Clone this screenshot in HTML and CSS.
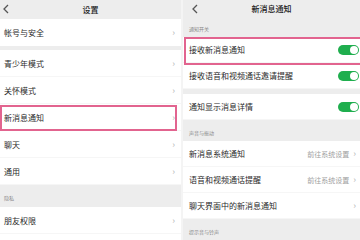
FILE: index.html
```html
<!DOCTYPE html>
<html lang="zh-CN">
<head>
  <meta charset="utf-8">
  <title>设置 / 新消息通知</title>
  <link rel="stylesheet" href="styles.css">
</head>
<body>
  <div class="screen left">
    <div class="bar">
      <svg class="back" width="8" height="10" viewBox="0 0 8 10"><polyline points="6,1 2,5 6,9" fill="none" stroke="#555" stroke-width="1.3"/></svg>
      <span class="title">设置</span>
    </div>
    <div class="row first"><span>帐号与安全</span><i class="chev">›</i></div>
    <div class="gap"></div>
    <div class="row"><span>青少年模式</span><i class="chev">›</i></div>
    <div class="row"><span>关怀模式</span><i class="chev">›</i></div>
    <div class="row hl"><span>新消息通知</span><i class="chev">›</i></div>
    <div class="row"><span>聊天</span><i class="chev">›</i></div>
    <div class="row"><span>通用</span><i class="chev">›</i></div>
    <div class="label tall">隐私</div>
    <div class="row"><span>朋友权限</span><i class="chev">›</i></div>
  </div>

  <div class="seam"></div>

  <div class="screen right">
    <div class="bar tallbar">
      <svg class="back" width="8" height="10" viewBox="0 0 8 10"><polyline points="6,1 2,5 6,9" fill="none" stroke="#555" stroke-width="1.3"/></svg>
      <span class="title">新消息通知</span>
    </div>
    <div class="label">通知开关</div>
    <div class="row hl"><span>接收新消息通知</span><b class="switch"></b></div>
    <div class="row"><span>接收语音和视频通话邀请提醒</span><b class="switch"></b></div>
    <div class="gap"></div>
    <div class="row"><span>通知显示消息详情</span><b class="switch"></b></div>
    <div class="label">声音与振动</div>
    <div class="row"><span>新消息系统通知</span><em class="hint">前往系统设置 <i class="chev">›</i></em></div>
    <div class="row"><span>语音和视频通话提醒</span><em class="hint">前往系统设置 <i class="chev">›</i></em></div>
    <div class="row"><span>聊天界面中的新消息通知</span><i class="chev">›</i></div>
    <div class="label">提示音与铃声</div>
  </div>
</body>
</html>
```

FILE: styles.css
```css
* { margin: 0; padding: 0; box-sizing: border-box; }
body {
  font-family: "Noto Sans CJK SC", "Noto Sans", sans-serif;
  width: 360px; height: 240px; overflow: hidden;
  display: flex; background: #fff; color: #2a2a2a;
}
.screen { display: flex; flex-direction: column; overflow: hidden; background: #fff; }
.left { width: 181px; }
.right { flex: 1; }
.seam { width: 2px; background: #f4f4f4; }

.bar {
  height: 19px; background: #ededed; position: relative;
  display: flex; align-items: center; justify-content: center;
}
.tallbar { height: 22px; }
.back { position: absolute; left: 2px; top: 4px; }
.right .back { left: 8px; top: 4px; }
.title { font-size: 8px; color: #222; font-weight: 500; }

.row {
  height: 27px; flex-shrink: 0; position: relative;
  display: flex; align-items: center; justify-content: space-between;
  padding: 0 6px 0 4px; font-size: 8px;
  border-bottom: 1px solid #f6f6f6;
}
.right .row { height: 26px; padding: 0 0 0 6px; }
.left .row.first { border-bottom: none; }
.gap { height: 4px; background: #ededed; flex-shrink: 0; }
.right .gap { height: 5px; }

.label {
  height: 21px; flex-shrink: 0; background: #ededed;
  font-size: 5px; color: #8a8a8a;
  display: flex; align-items: center; padding: 3px 0 0 6px;
}
.left .label { padding-left: 4px; }
.label.tall { height: 22px; }
.right .label:first-of-type { height: 20px; }

.chev { font-style: normal; color: #b5b5b5; font-size: 9px; line-height: 1; }
.right .row > .chev { margin-right: 4px; }
.hint { font-style: normal; color: #a0a0a0; font-size: 7px; margin-right: 4px; display: flex; align-items: center; gap: 4px; }

.switch {
  width: 21px; height: 10px; border-radius: 5px; background: #1fae4e;
  position: relative; margin-right: 1px;
}
.switch::after {
  content: ""; position: absolute; right: 1px; top: 1px;
  width: 8px; height: 8px; border-radius: 50%; background: #fff;
}

.hl::after {
  content: ""; position: absolute; left: 0; right: 4px; top: 1px; bottom: -1px;
  border: 2px solid #e2648f;
}
.right .hl::after { left: 1px; right: -4px; top: 0; bottom: -3px; }
```
